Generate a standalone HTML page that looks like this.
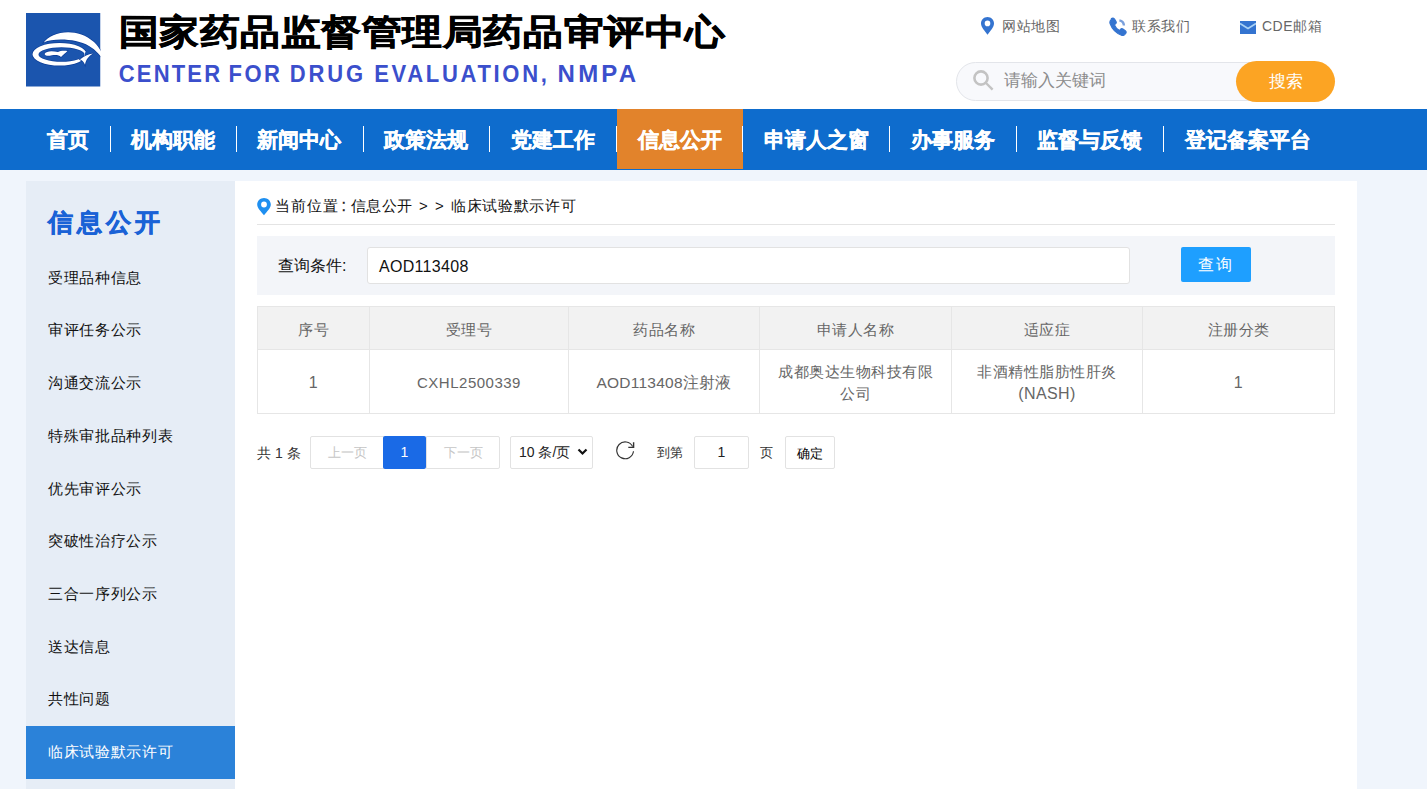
<!DOCTYPE html>
<html><head><meta charset="utf-8">
<style>
*{margin:0;padding:0;box-sizing:border-box}
html,body{width:1427px;height:789px;overflow:hidden;background:#f0f5fc;font-family:"Liberation Sans",sans-serif;color:#333}
.a{position:absolute;white-space:nowrap}
#hdr{position:absolute;left:0;top:0;width:1427px;height:109px;background:#fff}
#nav{position:absolute;left:0;top:109px;width:1427px;height:61px;background:#0e6ccd}
.ni{position:absolute;top:109px;height:61px;line-height:61px;color:#fff;font-size:21px;font-weight:bold;-webkit-text-stroke:0.35px #fff}
.sep{position:absolute;top:126px;width:1px;height:26px;background:#fff}
#side{position:absolute;left:26px;top:181px;width:209px;height:608px;background:#e6edf6}
#main{position:absolute;left:235px;top:181px;width:1122px;height:608px;background:#fff}
.mi{position:absolute;left:48px;width:187px;height:52.7px;line-height:51.7px;font-size:15px;letter-spacing:0.7px;color:#111}
.th{top:307px;height:42px;line-height:45px;text-align:center;font-size:15px;letter-spacing:0.5px;color:#666}
.td{top:350px;height:63px;line-height:66px;text-align:center;font-size:15px;letter-spacing:0.5px;color:#666}
.td2{top:361px;line-height:22px;text-align:center;font-size:15px;letter-spacing:0.5px;color:#666;white-space:normal}
.pb{top:436px;height:33px;border:1px solid #e2e2e2;background:#fff;font-size:13px;line-height:31px;text-align:center;border-radius:2px}
.pt{top:443px;font-size:13.5px;color:#333;line-height:20px}
.eng{top:60px;font-size:22px;font-weight:bold;color:#3b4fcc;line-height:26px;transform:scaleY(1.1);transform-origin:0 4.7px}
</style></head><body>
<div id="hdr"></div>
<!-- logo -->
<svg class="a" style="left:26px;top:13px" width="82" height="75" viewBox="0 0 82 75">
<rect x="0" y="0" width="74.5" height="73.5" fill="#1b55ae"/>
<path fill="#fff" stroke="#0d3e98" stroke-width="1.3" paint-order="stroke" fill-rule="evenodd" d="M6.5,41.3 A27,11.3 0 1 0 60.5,41.3 A27,11.3 0 1 0 6.5,41.3 Z M12.5,41.5 A23,7.2 0 1 0 58.5,41.5 A23,7.2 0 1 0 12.5,41.5 Z"/>
<path fill="#1b55ae" d="M59,39.5 L64,37 L64,46 L58.5,46 Z"/>
<path fill="#fff" stroke="#0d3e98" stroke-width="1.3" paint-order="stroke" d="M17.7,29.4 C25,19 50,13 68,29 C74,35 78,43 80,50 C75,43 70,37 63,33 C50,25.5 28,25 17.7,29.4 Z"/>
<path fill="#fff" stroke="#0d3e98" stroke-width="1.3" paint-order="stroke" d="M18.5,41 C20,37.5 27,37.8 32,39 C34,38 37,37.5 41.5,38 C39.5,40 37.5,41.5 35,44 C33,42 30,41.8 26,42.3 C22.5,43 20,43.5 18.5,41 Z"/>
<path fill="#fff" stroke="#0d3e98" stroke-width="1.3" paint-order="stroke" d="M54,46.5 C58,43 62,41.5 67,40.5 C63,43 60,46 59,51.7 C58,49 56.5,47.5 54,46.5 Z"/>
<rect x="74.5" y="0" width="8" height="75" fill="#fff"/></svg>
<div class="a" style="left:119px;top:8px;font-size:40px;font-weight:bold;color:#000;line-height:48px;letter-spacing:0.45px;-webkit-text-stroke:0.8px #000;transform:scaleY(0.88);transform-origin:0 23.5px">国家药品监督管理局药品审评中心</div>
<div class="a eng" style="left:118.8px;letter-spacing:2.16px">CENTER</div><div class="a eng" style="left:228.5px;letter-spacing:2.45px">FOR</div><div class="a eng" style="left:289.8px;letter-spacing:2.87px">DRUG</div><div class="a eng" style="left:374.2px;letter-spacing:2.68px">EVALUATION,</div><div class="a eng" style="left:557.6px;letter-spacing:3.2px;font-size:24px;transform:none;top:61px">NMPA</div>

<!-- top links -->
<svg class="a" style="left:980px;top:16px" width="15" height="20" viewBox="0 0 15 20"><path fill="#3474d0" fill-rule="evenodd" d="M7.5,1 C11.2,1 14,3.9 14,7.4 C14,11 10.5,14.5 7.5,18.7 C4.5,14.5 1,11 1,7.4 C1,3.9 3.8,1 7.5,1 Z M7.5,4.6 A2.8,2.8 0 1 0 7.5,10.2 A2.8,2.8 0 1 0 7.5,4.6 Z"/></svg>
<div class="a" style="left:1002px;top:16px;font-size:14px;letter-spacing:0.5px;color:#666;line-height:20px">网站地图</div>
<svg class="a" style="left:1109px;top:17px" width="18" height="19" viewBox="0 0 18 19"><path fill="#3474d0" stroke="#3474d0" stroke-width="1.2" stroke-linejoin="round" d="M2.5,1.5 C3.5,0.8 4.8,0.9 5.5,2 L7,4.6 C7.5,5.5 7.2,6.5 6.3,7.1 L5.3,7.8 C6.3,10.3 8.2,12.4 10.6,13.6 L11.4,12.6 C12,11.8 13.1,11.6 13.9,12.1 L16.3,13.7 C17.2,14.3 17.4,15.5 16.7,16.4 L15.6,17.6 C14.8,18.4 13.6,18.6 12.5,18.2 C7.3,16.2 3,12 1.1,6.6 C0.7,5.3 1,3.9 2,2.9 Z"/><path fill="none" stroke="#7aa0dc" stroke-width="2.4" d="M10.4,3.4 A5.5,5.5 0 0 1 14.9,8.5"/></svg>
<div class="a" style="left:1132px;top:16px;font-size:14px;letter-spacing:0.5px;color:#666;line-height:20px">联系我们</div>
<svg class="a" style="left:1240px;top:21px" width="16" height="13" viewBox="0 0 16 13"><rect x="0" y="0" width="16" height="13" fill="#3474d0"/><path fill="none" stroke="#a9d2f5" stroke-width="1.6" d="M0,2.5 L8,7.5 L16,2.5"/></svg>
<div class="a" style="left:1262px;top:16px;font-size:14px;letter-spacing:0.5px;color:#666;line-height:20px">CDE邮箱</div>

<!-- search -->
<div class="a" style="left:956px;top:62px;width:320px;height:39px;border:1px solid #e3e5ea;border-radius:20px;background:#f8f9fc"></div>
<svg class="a" style="left:971px;top:68px" width="24" height="24" viewBox="0 0 24 24"><circle cx="10" cy="10" r="6.6" fill="none" stroke="#c3c3c3" stroke-width="2.6"/><path d="M15,15 L21.6,21.6" stroke="#c3c3c3" stroke-width="2.4"/></svg>
<div class="a" style="left:1004px;top:70px;font-size:17px;color:#8c8c8c;line-height:22px">请输入关键词</div>
<div class="a" style="left:1236px;top:61px;width:99px;height:41px;border-radius:21px;background:#fca423;color:#fff;font-size:16.5px;text-align:center;line-height:41px">搜索</div>

<!-- nav -->
<div id="nav"></div>
<div class="a" style="left:617px;top:109px;width:126px;height:60px;background:#e2832b"></div>
<div class="ni" style="left:47px">首页</div>
<div class="sep" style="left:110px"></div>
<div class="ni" style="left:131px">机构职能</div>
<div class="sep" style="left:236px"></div>
<div class="ni" style="left:257px">新闻中心</div>
<div class="sep" style="left:363px"></div>
<div class="ni" style="left:384px">政策法规</div>
<div class="sep" style="left:489px"></div>
<div class="ni" style="left:511px">党建工作</div>
<div class="sep" style="left:616px"></div>
<div class="ni" style="left:638px">信息公开</div>
<div class="sep" style="left:742px"></div>
<div class="ni" style="left:764px">申请人之窗</div>
<div class="sep" style="left:889px"></div>
<div class="ni" style="left:911px">办事服务</div>
<div class="sep" style="left:1016px"></div>
<div class="ni" style="left:1037px">监督与反馈</div>
<div class="sep" style="left:1163px"></div>
<div class="ni" style="left:1185px">登记备案平台</div>

<!-- sidebar -->
<div id="side"></div>
<div class="a" style="left:48px;top:205px;font-size:25px;font-weight:bold;color:#1a62d6;line-height:34px;letter-spacing:4px;-webkit-text-stroke:0.6px #1a62d6">信息公开</div>
<div class="mi a" style="top:251.7px">受理品种信息</div>
<div class="mi a" style="top:304.4px">审评任务公示</div>
<div class="mi a" style="top:357.1px">沟通交流公示</div>
<div class="mi a" style="top:409.8px">特殊审批品种列表</div>
<div class="mi a" style="top:462.5px">优先审评公示</div>
<div class="mi a" style="top:515.2px">突破性治疗公示</div>
<div class="mi a" style="top:567.9px">三合一序列公示</div>
<div class="mi a" style="top:620.6px">送达信息</div>
<div class="mi a" style="top:673.3px">共性问题</div>
<div class="a" style="left:26px;top:726px;width:209px;height:53px;background:#2b82d9"></div>
<div class="mi a" style="top:726px;color:#fff">临床试验默示许可</div>

<!-- main -->
<div id="main"></div>
<!-- breadcrumb -->
<svg class="a" style="left:256px;top:197px" width="16" height="19" viewBox="0 0 16 19"><path fill="#1e8ff0" fill-rule="evenodd" d="M8,1 C11.6,1 14.8,3.8 14.8,7.6 C14.8,11.5 10.6,15 8,18.2 C5.4,15 1.2,11.5 1.2,7.6 C1.2,3.8 4.4,1 8,1 Z M8,4.6 A2.9,2.9 0 1 0 8,10.4 A2.9,2.9 0 1 0 8,4.6 Z"/></svg>
<div class="a" style="left:274.5px;top:196px;font-size:15px;letter-spacing:1px;color:#111;line-height:20px">当前位置</div>
<div class="a" style="left:341.5px;top:196px;font-size:16px;color:#111;line-height:20px;-webkit-text-stroke:0.3px #333">:</div>
<div class="a" style="left:350.5px;top:196px;font-size:15px;letter-spacing:0.5px;color:#111;line-height:20px">信息公开</div>
<div class="a" style="left:419px;top:196px;font-size:15px;color:#111;line-height:20px">&gt;</div>
<div class="a" style="left:435px;top:196px;font-size:15px;color:#111;line-height:20px">&gt;</div>
<div class="a" style="left:451px;top:196px;font-size:15px;letter-spacing:0.7px;color:#111;line-height:20px">临床试验默示许可</div>
<div class="a" style="left:257px;top:224px;width:1078px;height:1px;background:#e4e4e4"></div>
<!-- query -->
<div class="a" style="left:257px;top:236px;width:1078px;height:59px;background:#f3f5f9"></div>
<div class="a" style="left:278px;top:256px;font-size:16px;color:#111;line-height:20px">查询条件:</div>
<div class="a" style="left:367px;top:247px;width:763px;height:37px;background:#fff;border:1px solid #e2e2e2;border-radius:3px"></div>
<div class="a" style="left:379px;top:257px;font-size:16px;color:#111;line-height:20px;letter-spacing:0.3px">AOD113408</div>
<div class="a" style="left:1181px;top:247px;width:70px;height:35px;background:#1e9fff;border-radius:2px;color:#fff;font-size:16px;line-height:35px;text-align:center;letter-spacing:2.5px">查询</div>
<!-- table -->
<div class="a" style="left:257px;top:306px;width:1078px;height:108px;border:1px solid #e6e6e6;background:#fff"></div>
<div class="a" style="left:258px;top:307px;width:1076px;height:43px;background:#f2f2f2"></div>
<div class="a" style="left:258px;top:349px;width:1076px;height:1px;background:#e6e6e6"></div>
<div class="a" style="left:369px;top:307px;width:1px;height:106px;background:#e6e6e6"></div>
<div class="a" style="left:568px;top:307px;width:1px;height:106px;background:#e6e6e6"></div>
<div class="a" style="left:759px;top:307px;width:1px;height:106px;background:#e6e6e6"></div>
<div class="a" style="left:951px;top:307px;width:1px;height:106px;background:#e6e6e6"></div>
<div class="a" style="left:1142px;top:307px;width:1px;height:106px;background:#e6e6e6"></div>
<div class="th a" style="left:258px;width:111px">序号</div>
<div class="th a" style="left:370px;width:198px">受理号</div>
<div class="th a" style="left:569px;width:190px">药品名称</div>
<div class="th a" style="left:760px;width:191px">申请人名称</div>
<div class="th a" style="left:952px;width:190px">适应症</div>
<div class="th a" style="left:1143px;width:191px">注册分类</div>
<div class="td a" style="left:258px;width:111px;font-size:16px">1</div>
<div class="td a" style="left:370px;width:198px;font-size:15px;letter-spacing:0.5px">CXHL2500339</div>
<div class="td a" style="left:569px;width:190px;font-size:15.5px;letter-spacing:0.25px">AOD113408注射液</div>
<div class="td2 a" style="left:760px;width:191px">成都奥达生物科技有限<br>公司</div>
<div class="td2 a" style="left:952px;width:190px">非酒精性脂肪性肝炎<br><span style="font-size:16px;letter-spacing:0.4px">(NASH)</span></div>
<div class="td a" style="left:1143px;width:191px;font-size:16px">1</div>
<!-- pager -->
<div class="a pt" style="left:257px;font-size:14px">共 1 条</div>
<div class="a pb" style="left:310px;width:74px;color:#c5c5c5;font-size:13px;border-radius:2px 0 0 2px">上一页</div>
<div class="a" style="left:383px;top:436px;width:43px;height:33px;background:#1a6ae6;color:#fff;font-size:14px;line-height:33px;text-align:center;border-radius:2px">1</div>
<div class="a pb" style="left:426px;width:74px;color:#c5c5c5;font-size:13px;border-radius:0 2px 2px 0">下一页</div>
<div class="a pb" style="left:510px;width:83px;color:#222;text-align:left;padding-left:8px;font-size:14px">10 条/页</div>
<svg class="a" style="left:577px;top:448px" width="11" height="8" viewBox="0 0 11 8"><path d="M1.5,1.5 L5.5,5.5 L9.5,1.5" fill="none" stroke="#111" stroke-width="2.2"/></svg>
<svg class="a" style="left:615px;top:441px" width="21" height="20" viewBox="0 0 21 20"><path fill="none" stroke="#333" stroke-width="1.15" d="M17.6,5.4 A8.4,8.4 0 1 0 18.5,10.3"/><path fill="none" stroke="#333" stroke-width="1.4" d="M18.6,1.2 L18.6,6.4 L13.3,6.4"/></svg>
<div class="a pt" style="left:657px;font-size:13px">到第</div>
<div class="a pb" style="left:694px;width:55px;color:#222;font-size:14px">1</div>
<div class="a pt" style="left:760px;font-size:13px">页</div>
<div class="a pb" style="left:785px;width:50px;color:#000;font-size:13px;padding-top:1px">确定</div>
</body></html>
